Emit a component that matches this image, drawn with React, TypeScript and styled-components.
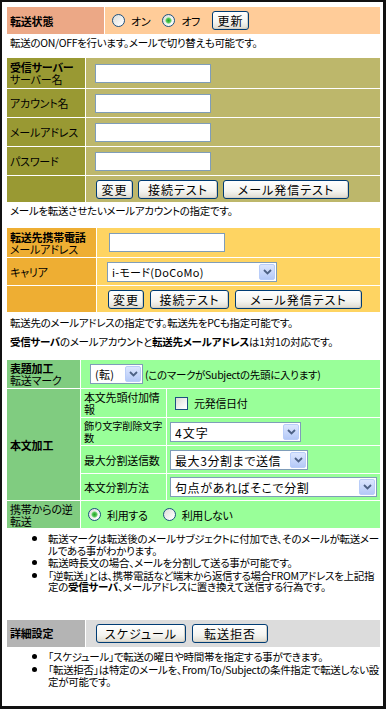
import React from "react";
import styled, { createGlobalStyle } from "styled-components";

/* ---- palette ---- */
const pal = {
	frame: "#111111",
	stateLabel: "#eca886",
	stateValue: "#ffcc99",
	olive: "#999933",
	khaki: "#bdb76b",
	orange: "#eeae33",
	yellow: "#fed462",
	greenDark: "#80cc80",
	green: "#99ff99",
	grayDark: "#b4b4b4",
	gray: "#dcdcdc",
	inputBorder: "#7f9db9",
	btnBorder: "#003c74",
};

const GlobalStyle = createGlobalStyle`
	html, body {
		margin: 0;
		padding: 0;
		background: #fff;
	}
	body {
		font-family: "Noto Sans CJK JP", "Noto Sans", sans-serif;
		font-size: 10.5px;
		letter-spacing: -0.3px;
		color: #000;
		font-feature-settings: "palt";
	}
`;

const Frame = styled.div`
	box-sizing: border-box;
	width: 386px;
	height: 709px;
	border-style: solid;
	border-color: ${pal.frame};
	border-width: 2px 3px 3px 2px;
	padding: 5px 3px 0 5px;
	overflow: hidden;
`;

const Section = styled.div<{ $cols: string; $rows: string }>`
	display: grid;
	grid-template-columns: ${(p) => p.$cols};
	grid-template-rows: ${(p) => p.$rows};
	gap: 1px;
	background: #fff;
`;

const Label = styled.div<{ $bg: string; $span?: number; $fs?: number }>`
	background: ${(p) => p.$bg};
	display: flex;
	flex-direction: column;
	justify-content: center;
	padding: 0 2px 0 3px;
	font-size: ${(p) => p.$fs ?? 11}px;
	letter-spacing: -0.2px;
	line-height: 12px;
	white-space: nowrap;
	overflow: hidden;
	grid-row: ${(p) => (p.$span ? `span ${p.$span}` : "auto")};
`;

const Value = styled.div<{ $bg: string; $pl: number; $gap?: number; $span?: number }>`
	background: ${(p) => p.$bg};
	display: flex;
	align-items: center;
	gap: ${(p) => p.$gap ?? 5}px;
	padding-left: ${(p) => p.$pl}px;
	white-space: nowrap;
	grid-column: ${(p) => (p.$span ? `span ${p.$span}` : "auto")};
`;

const Strong = styled.b`
	font-weight: bold;
`;

const Note = styled.p<{ $mt: number; $mb: number }>`
	margin: ${(p) => p.$mt}px 0 ${(p) => p.$mb}px;
	padding: 0 3px;
	line-height: 16px;
	white-space: nowrap;
`;

const Bullets = styled.ul<{ $mt: number; $mb: number; $lh: number }>`
	margin: ${(p) => p.$mt}px 0 ${(p) => p.$mb}px;
	padding: 0 0 0 41px;
	line-height: ${(p) => p.$lh}px;
	list-style: disc;
	li {
		white-space: nowrap;
	}
	li::marker {
		font-size: 12px;
	}
`;

const TextInput = styled.input<{ $w: number }>`
	box-sizing: border-box;
	width: ${(p) => p.$w}px;
	height: 19px;
	border: 1px solid ${pal.inputBorder};
	background: #fff;
	margin: 0;
	padding: 0 2px;
	font: inherit;
	outline: none;
`;

const Button = styled.button<{ $w: number }>`
	box-sizing: border-box;
	width: ${(p) => p.$w}px;
	height: 19px;
	margin: 0;
	padding: 0;
	border: 1px solid ${pal.btnBorder};
	border-radius: 3px;
	background: linear-gradient(#ffffff 0%, #f4f4f0 60%, #dedbd0 100%);
	box-shadow: inset -1px -1px 0 #d6d0c4;
	font-family: inherit;
	font-size: 12px;
	font-feature-settings: "palt";
	letter-spacing: 1px;
	line-height: 17px;
	color: #000;
`;

const Radio = styled.input.attrs({ type: "radio" })`
	appearance: none;
	box-sizing: border-box;
	width: 13px;
	height: 13px;
	margin: 0 6px 0 0;
	border: 1px solid #1c5180;
	border-radius: 50%;
	background: linear-gradient(135deg, #dcdcd7 0%, #ffffff 90%);
	&:checked {
		background: radial-gradient(circle, #26a326 0, #4fc34f 2px, #a9e6a9 3px, transparent 3.5px),
			linear-gradient(135deg, #dcdcd7 0%, #ffffff 90%);
	}
`;

const Check = styled.input.attrs({ type: "checkbox" })`
	appearance: none;
	box-sizing: border-box;
	width: 13px;
	height: 13px;
	margin: 0 6px 0 0;
	border: 1px solid #1c5180;
	background: linear-gradient(135deg, #dcdcd7 0%, #ffffff 90%);
`;

const Choice = styled.label<{ $mr?: number }>`
	display: inline-flex;
	align-items: center;
	font-size: 11px;
	margin-right: ${(p) => p.$mr ?? 12}px;
`;

const SelectBox = styled.div<{ $w: number; $h: number }>`
	box-sizing: border-box;
	display: inline-flex;
	width: ${(p) => p.$w}px;
	height: ${(p) => p.$h}px;
	border: 1px solid ${pal.inputBorder};
	background: #fff;
	padding: 1px;
`;

const SelectField = styled.select<{ $fs: number; $ls: number }>`
	appearance: none;
	flex: 1;
	min-width: 0;
	border: none;
	outline: none;
	background: transparent;
	margin: 0;
	padding: 0 3px;
	font-family: inherit;
	font-size: ${(p) => p.$fs}px;
	font-feature-settings: "palt";
	letter-spacing: ${(p) => p.$ls}px;
	color: #000;
`;

const SelectArrow = styled.span`
	box-sizing: border-box;
	width: 16px;
	display: flex;
	align-items: center;
	justify-content: center;
	background: linear-gradient(#dce6fe, #b4c9f7);
	border: 1px solid #b9cdf9;
	border-radius: 2px;
`;

const Row = styled.div<{ $gap: number }>`
	display: flex;
	align-items: center;
	gap: ${(p) => p.$gap}px;
`;

function Select(props: { w: number; h?: number; fs?: number; ls?: number; value: string }) {
	return (
		<SelectBox $w={props.w} $h={props.h ?? 20}>
			<SelectField $fs={props.fs ?? 11} $ls={props.ls ?? 0.3} defaultValue={props.value}>
				<option>{props.value}</option>
			</SelectField>
			<SelectArrow>
				<svg width="9" height="6" viewBox="0 0 9 6">
					<path d="M1 1 L4.5 4.5 L8 1" fill="none" stroke="#4d6185" strokeWidth="1.8" />
				</svg>
			</SelectArrow>
		</SelectBox>
	);
}

export default function App() {
	return (
		<>
			<GlobalStyle />
			<Frame>
				{/* 転送状態 */}
				<Section $cols="97px 1fr" $rows="27px">
					<Label $bg={pal.stateLabel}>
						<Strong>転送状態</Strong>
					</Label>
					<Value $bg={pal.stateValue} $pl={7} $gap={0}>
						<Choice>
							<Radio name="state" />
							オン
						</Choice>
						<Choice>
							<Radio name="state" defaultChecked />
							オフ
						</Choice>
						<Button $w={37}>更新</Button>
					</Value>
				</Section>
				<Note $mt={1} $mb={7}>
					転送のON/OFFを行います。メールで切り替えも可能です。
				</Note>

				{/* 受信サーバー */}
				<Section $cols="78px 1fr" $rows="30px 28px 28px 28px 26px">
					<Label $bg={pal.olive}>
						<Strong>受信サーバー</Strong>
						<span>サーバー名</span>
					</Label>
					<Value $bg={pal.khaki} $pl={9}>
						<TextInput $w={116} />
					</Value>
					<Label $bg={pal.olive}>アカウント名</Label>
					<Value $bg={pal.khaki} $pl={9}>
						<TextInput $w={116} />
					</Value>
					<Label $bg={pal.olive}>メールアドレス</Label>
					<Value $bg={pal.khaki} $pl={9}>
						<TextInput $w={116} />
					</Value>
					<Label $bg={pal.olive}>パスワード</Label>
					<Value $bg={pal.khaki} $pl={9}>
						<TextInput $w={116} type="password" />
					</Value>
					<Label $bg={pal.olive} />
					<Value $bg={pal.khaki} $pl={10}>
						<Row $gap={5}>
							<Button $w={37}>変更</Button>
							<Button $w={80}>接続テスト</Button>
							<Button $w={126}>メール発信テスト</Button>
						</Row>
					</Value>
				</Section>
				<Note $mt={1} $mb={9}>
					メールを転送させたいメールアカウントの指定です。
				</Note>

				{/* 転送先携帯電話 */}
				<Section $cols="89px 1fr" $rows="29px 27px 26px">
					<Label $bg={pal.orange}>
						<Strong>転送先携帯電話</Strong>
						<span>メールアドレス</span>
					</Label>
					<Value $bg={pal.yellow} $pl={12}>
						<TextInput $w={116} />
					</Value>
					<Label $bg={pal.orange}>キャリア</Label>
					<Value $bg={pal.yellow} $pl={10}>
						<Select w={170} value="i-モード(DoCoMo)" />
					</Value>
					<Label $bg={pal.orange} />
					<Value $bg={pal.yellow} $pl={11}>
						<Row $gap={6}>
							<Button $w={36}>変更</Button>
							<Button $w={79}>接続テスト</Button>
							<Button $w={127}>メール発信テスト</Button>
						</Row>
					</Value>
				</Section>
				<Note $mt={3} $mb={0}>
					転送先のメールアドレスの指定です。転送先をPCも指定可能です。
				</Note>
				<Note $mt={3} $mb={10}>
					<Strong>受信サーバ</Strong>のメールアカウントと<Strong>転送先メールアドレス</Strong>は1対1の対応です。
				</Note>

				{/* 表題・本文加工 */}
				<Section $cols="73px 85px 1fr" $rows="28px 28px 27px 27px 26px 27px">
					<Label $bg={pal.greenDark}>
						<Strong>表題加工</Strong>
						<span>転送マーク</span>
					</Label>
					<Value $bg={pal.green} $pl={9} $gap={2} $span={2}>
						<Select w={53} value="(転)" />
						<span>(このマークがSubjectの先頭に入ります)</span>
					</Value>

					<Label $bg={pal.greenDark} $span={4}>
						<Strong>本文加工</Strong>
					</Label>
					<Label $bg={pal.green}>
						<span>本文先頭付加情</span>
						<span>報</span>
					</Label>
					<Value $bg={pal.green} $pl={8}>
						<Choice>
							<Check />
							元発信日付
						</Choice>
					</Value>
					<Label $bg={pal.green} $fs={10.2}>
						<span>飾り文字削除文字</span>
						<span>数</span>
					</Label>
					<Value $bg={pal.green} $pl={3}>
						<Select w={131} fs={12} ls={1} value="4文字" />
					</Value>
					<Label $bg={pal.green}>最大分割送信数</Label>
					<Value $bg={pal.green} $pl={3}>
						<Select w={138} fs={12} ls={0.6} value="最大3分割まで送信" />
					</Value>
					<Label $bg={pal.green}>本文分割方法</Label>
					<Value $bg={pal.green} $pl={3}>
						<Select w={207} fs={12} ls={0.6} value="句点があればそこで分割" />
					</Value>

					<Label $bg={pal.greenDark}>
						<span>携帯からの逆</span>
						<span>転送</span>
					</Label>
					<Value $bg={pal.green} $pl={7} $gap={0} $span={2}>
						<Choice $mr={15}>
							<Radio name="reverse" defaultChecked />
							利用する
						</Choice>
						<Choice>
							<Radio name="reverse" />
							利用しない
						</Choice>
					</Value>
				</Section>
				<Bullets $mt={4} $mb={27} $lh={11.5}>
					<li>
						転送マークは転送後のメールサブジェクトに付加でき、そのメールが転送メー
						<br />
						ルである事がわかります。
					</li>
					<li>転送時長文の場合、メールを分割して送る事が可能です。</li>
					<li>
						「逆転送」とは、携帯電話など端末から返信する場合FROMアドレスを上記指
						<br />
						定の<Strong>受信サーバ</Strong>、メールアドレスに置き換えて送信する行為です。
					</li>
				</Bullets>

				{/* 詳細設定 */}
				<Section $cols="78px 1fr" $rows="27px">
					<Label $bg={pal.grayDark}>
						<Strong>詳細設定</Strong>
					</Label>
					<Value $bg={pal.gray} $pl={10} $gap={6}>
						<Button $w={90}>スケジュール</Button>
						<Button $w={76}>転送拒否</Button>
					</Value>
				</Section>
				<Bullets $mt={3} $mb={0} $lh={12}>
					<li>「スケジュール」で転送の曜日や時間帯を指定する事ができます。</li>
					<li>
						「転送拒否」は特定のメールを、From/To/Subjectの条件指定で転送しない設
						<br />
						定が可能です。
					</li>
				</Bullets>
			</Frame>
		</>
	);
}
